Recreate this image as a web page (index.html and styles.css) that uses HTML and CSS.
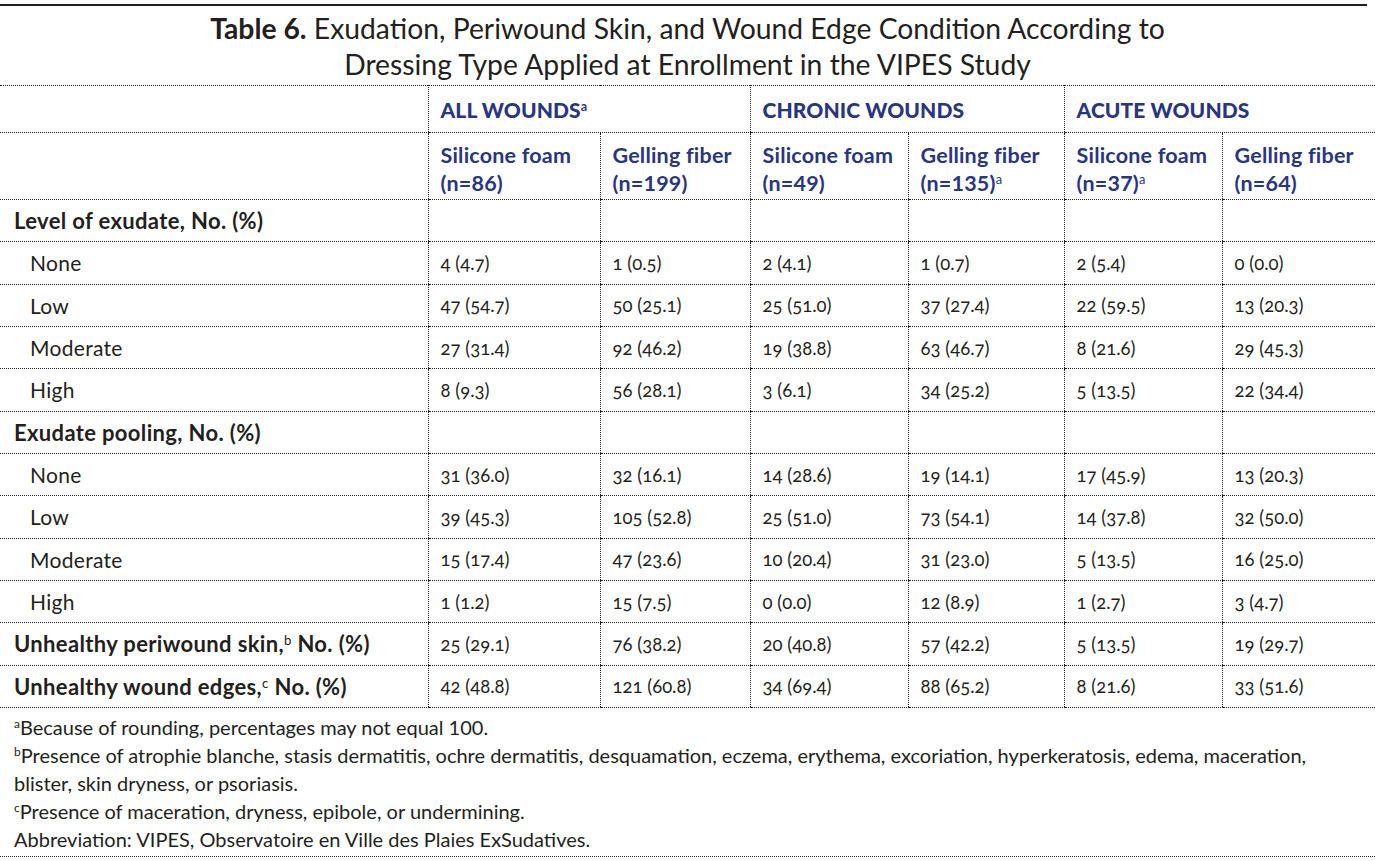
FILE: index.html
```html
<!DOCTYPE html>
<html lang="en">
<head>
<meta charset="utf-8">
<title>Table 6</title>
<link rel="stylesheet" href="styles.css">
</head>
<body>
<div class="page">
  <div class="rule"></div>
  <h1 class="title"><span class="title-num">Table 6.</span> Exudation, Periwound Skin, and Wound Edge Condition According to<br>Dressing Type Applied at Enrollment in the VIPES Study</h1>
  <table class="data">
    <colgroup>
      <col class="c-label"><col class="c1"><col class="c2"><col class="c3"><col class="c4"><col class="c5"><col class="c6">
    </colgroup>
    <thead>
      <tr class="group-row">
        <th class="blank"></th>
        <th colspan="2" class="group">ALL WOUNDS<sup>a</sup></th>
        <th colspan="2" class="group">CHRONIC WOUNDS</th>
        <th colspan="2" class="group">ACUTE WOUNDS</th>
      </tr>
      <tr class="sub-row">
        <th class="blank"></th>
        <th class="sub">Silicone foam<br>(n=86)</th>
        <th class="sub">Gelling fiber<br>(n=199)</th>
        <th class="sub">Silicone foam<br>(n=49)</th>
        <th class="sub">Gelling fiber<br>(n=135)<sup>a</sup></th>
        <th class="sub">Silicone foam<br>(n=37)<sup>a</sup></th>
        <th class="sub">Gelling fiber<br>(n=64)</th>
      </tr>
    </thead>
    <tbody>
      <tr class="section"><td class="label">Level of exudate, No. (%)</td><td></td><td></td><td></td><td></td><td></td><td></td></tr>
      <tr><td class="label sub-label">None</td><td>4 (4.7)</td><td>1 (0.5)</td><td>2 (4.1)</td><td>1 (0.7)</td><td>2 (5.4)</td><td>0 (0.0)</td></tr>
      <tr><td class="label sub-label">Low</td><td>47 (54.7)</td><td>50 (25.1)</td><td>25 (51.0)</td><td>37 (27.4)</td><td>22 (59.5)</td><td>13 (20.3)</td></tr>
      <tr><td class="label sub-label">Moderate</td><td>27 (31.4)</td><td>92 (46.2)</td><td>19 (38.8)</td><td>63 (46.7)</td><td>8 (21.6)</td><td>29 (45.3)</td></tr>
      <tr><td class="label sub-label">High</td><td>8 (9.3)</td><td>56 (28.1)</td><td>3 (6.1)</td><td>34 (25.2)</td><td>5 (13.5)</td><td>22 (34.4)</td></tr>
      <tr class="section"><td class="label">Exudate pooling, No. (%)</td><td></td><td></td><td></td><td></td><td></td><td></td></tr>
      <tr><td class="label sub-label">None</td><td>31 (36.0)</td><td>32 (16.1)</td><td>14 (28.6)</td><td>19 (14.1)</td><td>17 (45.9)</td><td>13 (20.3)</td></tr>
      <tr><td class="label sub-label">Low</td><td>39 (45.3)</td><td>105 (52.8)</td><td>25 (51.0)</td><td>73 (54.1)</td><td>14 (37.8)</td><td>32 (50.0)</td></tr>
      <tr><td class="label sub-label">Moderate</td><td>15 (17.4)</td><td>47 (23.6)</td><td>10 (20.4)</td><td>31 (23.0)</td><td>5 (13.5)</td><td>16 (25.0)</td></tr>
      <tr><td class="label sub-label">High</td><td>1 (1.2)</td><td>15 (7.5)</td><td>0 (0.0)</td><td>12 (8.9)</td><td>1 (2.7)</td><td>3 (4.7)</td></tr>
      <tr class="section"><td class="label">Unhealthy periwound skin,<sup>b</sup> No. (%)</td><td>25 (29.1)</td><td>76 (38.2)</td><td>20 (40.8)</td><td>57 (42.2)</td><td>5 (13.5)</td><td>19 (29.7)</td></tr>
      <tr class="section"><td class="label">Unhealthy wound edges,<sup>c</sup> No. (%)</td><td>42 (48.8)</td><td>121 (60.8)</td><td>34 (69.4)</td><td>88 (65.2)</td><td>8 (21.6)</td><td>33 (51.6)</td></tr>
    </tbody>
  </table>
  <div class="notes">
    <p><sup>a</sup>Because of rounding, percentages may not equal 100.</p>
    <p><sup>b</sup>Presence of atrophie blanche, stasis dermatitis, ochre dermatitis, desquamation, eczema, erythema, excoriation, hyperkeratosis, edema, maceration,<br>blister, skin dryness, or psoriasis.</p>
    <p><sup>c</sup>Presence of maceration, dryness, epibole, or undermining.</p>
    <p>Abbreviation: VIPES, Observatoire en Ville des Plaies ExSudatives.</p>
  </div>
</div>
</body>
</html>
```
FILE: styles.css
```css
html, body {
  margin: 0;
  padding: 0;
  background: #ffffff;
}

body {
  font-family: Lato, "Open Sans", "Noto Sans", sans-serif;
  color: #231f20;
}

.page {
  width: 1375px;
  padding-top: 4px;
}

.rule {
  width: 1367px;
  height: 2px;
  background: #231f20;
}

.title {
  margin: 0;
  padding: 4px 0 3px;
  text-align: center;
  font-size: 28.3px;
  font-weight: 400;
  line-height: 36px;
  color: #231f20;
}

.title-num {
  font-weight: 700;
}

.data {
  width: 1375px;
  border-collapse: collapse;
  table-layout: fixed;
  border-top: 1px dotted #231f20;
}

.c-label { width: 428px; }
.c1 { width: 172px; }
.c2 { width: 150px; }
.c3 { width: 158px; }
.c4 { width: 156px; }
.c5 { width: 158px; }
.c6 { width: 153px; }

.data th,
.data td {
  border-bottom: 1px dotted #231f20;
  border-left: 1px dotted #231f20;
  padding: 0 12px;
  text-align: left;
  vertical-align: middle;
  white-space: nowrap;
}

.data th.blank,
.data td.label {
  border-left: none;
}

.data th {
  color: #283583;
}

.group-row th {
  height: 46px;
  font-size: 21px;
  font-weight: 900;
  letter-spacing: 0.1px;
}

.sub-row th {
  height: 58px;
  font-size: 21.5px;
  font-weight: 700;
  line-height: 28px;
  letter-spacing: 0.2px;
  vertical-align: top;
  padding-top: 8px;
  padding-right: 0;
}

.data td {
  height: 41.33px;
  font-size: 18.5px;
  font-variant-numeric: oldstyle-nums;
  font-feature-settings: "onum" 1;
}

.data td.label {
  padding-left: 14px;
  font-size: 22px;
  font-weight: 700;
  letter-spacing: 0.35px;
}

.data td.sub-label {
  padding-left: 30px;
  font-size: 21px;
  font-weight: 400;
  letter-spacing: 0.3px;
}

sup {
  font-size: 0.6em;
  line-height: 0;
  vertical-align: 0.55em;
  font-weight: 400;
}

.group sup {
  font-weight: 700;
}

.notes {
  padding: 5px 0 3px 14px;
  width: 1361px;
  border-bottom: 1px dotted #231f20;
  font-size: 20px;
  line-height: 28px;
}

.notes p {
  margin: 0;
}

.notes sup {
  font-size: 0.6em;
  vertical-align: 0.6em;
}
```
